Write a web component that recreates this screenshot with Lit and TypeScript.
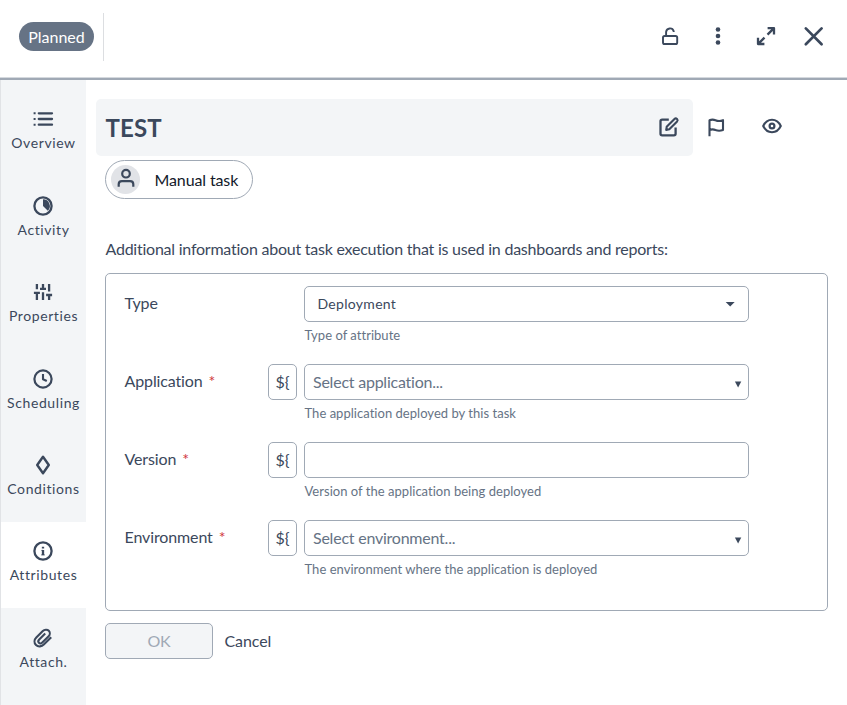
import { LitElement, html, css, svg, nothing, type TemplateResult } from "lit";
import { customElement, property } from "lit/decorators.js";
import { classMap } from "lit/directives/class-map.js";

const icons: Record<string, TemplateResult> = {
  list: svg`<path d="M5.8 4.3H19M5.8 10H19M5.8 15.7H19" stroke-width="2.3" stroke-linecap="round"/><path class="solid" d="M.6 3.3h2v2h-2zM.6 9h2v2h-2zM.6 14.7h2v2h-2z"/>`,
  activity: svg`<circle cx="10" cy="10" r="8.6" stroke-width="2.3"/><path class="solid" d="M10 3.2A6.8 6.8 0 0 1 14.8 14.8L10 10Z"/>`,
  sliders: svg`<path d="M3.9 2V7.2M.9 10.9H6.9M3.9 10.9V18M10 2V6.9M7 6.9H13M10 10.2V18M16.1 2V9.6M13.1 13H19.1M16.1 13V18" stroke-width="2.3"/>`,
  clock: svg`<circle cx="10" cy="10" r="8.6" stroke-width="2.2"/><path d="M10 5V10.2L13.8 12" stroke-width="2.1"/>`,
  diamond: svg`<path d="M10 1.8L15.8 10L10 18.2L4.2 10Z" stroke-width="2.4"/>`,
  info: svg`<circle cx="10" cy="10" r="8.6" stroke-width="2.3"/><path d="M10 8.9V14M10 5.7V7.6" stroke-width="2.3"/><path d="M8.5 9.4H10M8.3 13.9H11.7" stroke-width="1"/>`,
  clip: svg`<path d="M18.2 9.2L10.8 16.6C8.7 18.7 5.2 19.2 3 17C.8 14.8 1.2 11.7 3.3 9.6L9.8 3.1C11.4 1.5 14.2 1.1 15.8 2.7C17.4 4.3 17 6.9 15.4 8.5L9.3 14.6C8.3 15.6 6.8 15.8 5.9 14.8C5 13.9 5.3 12.5 6.2 11.6L12.2 5.6" stroke-width="2.1"/>`,
  lock: svg`<rect x="3" y="10" width="14.2" height="8" rx="1.6" stroke-width="1.9"/><path d="M6.1 9.8V5.8A3.9 3.9 0 0 1 13.7 5.2V5.9" stroke-width="1.9"/>`,
  dots: svg`<g class="solid"><circle cx="10" cy="3.5" r="2.3"/><circle cx="10" cy="10" r="2.3"/><circle cx="10" cy="16.5" r="2.3"/></g>`,
  expand: svg`<path d="M11.5 8.6L17.5 2.6M11.6 2.2H18V8.4M8.5 11.6L2.5 17.6M2 11.8V18H8.4" stroke-width="2.3"/>`,
  close: svg`<path d="M1.8 2.4L17.6 18.2M17.6 2.4L1.8 18.2" stroke-width="2.7" stroke-linecap="round"/>`,
  edit: svg`<path d="M9.8 2.6H3.2Q1.5 2.6 1.5 4.3V16.8Q1.5 18.4 3.2 18.4H14.9Q16.6 18.4 16.6 16.8V10.6" stroke-width="2.3"/><path d="M7.2 12.9L7.7 9.8L15.5 1.9Q16.7 .7 18 1.9Q19.2 3.2 18.1 4.4L10.3 12.3Z" stroke-width="2.1"/>`,
  flag: svg`<path d="M3.5 18.2V2.2Q6.5 1 9.5 2.2Q13 3.8 17 2.2V12Q13 13.4 9.5 12Q6.5 10.7 3.5 12" stroke-width="2.1"/>`,
  eye: svg`<path d="M1.2 10Q4.2 3.8 10 3.8T18.8 10Q15.8 16.2 10 16.2T1.2 10Z" stroke-width="2.1"/><circle cx="10" cy="10" r="2.4" stroke-width="2.2"/>`,
  user: svg`<circle cx="10" cy="5.7" r="3.8" stroke-width="2.2"/><path d="M2.7 18.7V16.3Q2.7 13.1 5.9 13.1H14.1Q17.3 13.1 17.3 16.3V18.7" stroke-width="2.2"/>`,
  caret: svg`<path class="solid" d="M5.7 8H14.7L10.2 12.4Z"/>`,
  triangle: svg`<path class="solid" d="M6.9 9.4H13.3L10.1 15.4Z"/>`,
};

@customElement("app-icon")
class AppIcon extends LitElement {
  @property() name = "";
  static styles = css`
    :host { display: block; width: 20px; height: 20px; flex: none; color: #3b485c; }
    svg { display: block; width: 20px; height: 20px; fill: none; stroke: currentColor; stroke-linejoin: round; overflow: visible; }
    .solid { fill: currentColor; stroke: none; }
  `;
  render() {
    return html`<svg viewBox="0 0 20 20" aria-hidden="true">${icons[this.name]}</svg>`;
  }
}

interface Field {
  label: string;
  hint: string;
  kind: "choice" | "combo" | "text";
  value: string;
  required: boolean;
}

const fields: Field[] = [
  { label: "Type", hint: "Type of attribute", kind: "choice", value: "Deployment", required: false },
  { label: "Application", hint: "The application deployed by this task", kind: "combo", value: "Select application...", required: true },
  { label: "Version", hint: "Version of the application being deployed", kind: "text", value: "", required: true },
  { label: "Environment", hint: "The environment where the application is deployed", kind: "combo", value: "Select environment...", required: true },
];

const tabs = [
  ["list", "Overview"],
  ["activity", "Activity"],
  ["sliders", "Properties"],
  ["clock", "Scheduling"],
  ["diamond", "Conditions"],
  ["info", "Attributes"],
  ["clip", "Attach."],
];

@customElement("app-root")
class AppRoot extends LitElement {
  static styles = css`
    :host { display: flex; flex-direction: column; height: 705px; overflow: hidden; background: #fff; color: #3b485c; font: 16px/20px Lato, sans-serif; font-variant-ligatures: none; }
    * { box-sizing: border-box; }
    .header { height: 80px; flex: none; display: flex; align-items: center; padding: 0 23px 4px 19px; border-bottom: 2px solid #a0a9b5; box-shadow: inset 0 -1px #d5d9de; }
    .status { height: 29px; width: 75px; border-radius: 15px; background: #667385; color: #fff; line-height: 29px; text-align: center; margin-top: -1px; }
    .divider { width: 1px; height: 48px; margin-left: 9px; background: #dcdee1; }
    .actions { display: flex; gap: 28px; margin: -2px 0 0 auto; }
    .body { flex: 1; display: flex; min-height: 0; }
    .tabs { width: 86px; flex: none; padding-top: 9.38px; background: #f3f5f7; border-left: 1px solid #e1e3e6; }
    .tab { height: 86.4px; display: flex; flex-direction: column; align-items: center; padding-top: 20px; font-size: 14px; letter-spacing: .6px; }
    .tab app-icon { margin-left: -1px; }
    .tab span { margin-top: 4px; white-space: nowrap; }
    .active { background: #fff; box-shadow: inset 0 1px #f3f5f7; }
    .main { flex: 1; padding: 19px 19px 0 10px; }
    .titlebar { display: flex; align-items: center; }
    .title { width: 597px; height: 57px; display: flex; align-items: center; justify-content: space-between; padding: 0 14px 0 9.5px; border-radius: 5px; background: #f3f5f7; font-size: 24px; font-weight: 700; letter-spacing: .1px; }
    .title app-icon { margin-top: -2px; }
    .flag { margin-left: 13px; }
    .eye { margin: -4px 0 0 36px; }
    .content { padding-left: 9px; }
    .kind { width: 148px; height: 39px; margin-top: 4px; display: flex; align-items: center; gap: 14.5px; padding: 0 0 1px 5px; border: 1px solid #a0a9b5; border-radius: 20px; color: #13192a; letter-spacing: -.12px; }
    .kind span { padding-top: 2px; }
    .avatar { width: 29px; height: 29px; border-radius: 50%; background: #e1e3e7; display: flex; align-items: center; justify-content: center; }
    .avatar app-icon { margin-top: -2px; }
    .lead { margin: 40px 0 14px .5px; letter-spacing: -.235px; white-space: nowrap; }
    .form { height: 338px; padding: 12px 0 0 18.5px; border: 1px solid #a0a9b5; border-radius: 5px; }
    .row { height: 78px; display: grid; grid-template-columns: 143.5px 29px 445px; grid-template-rows: 36px 27px; }
    .label { padding-top: 7px; letter-spacing: -.12px; }
    .star { margin-left: 2px; color: #d0363c; font-size: 16px; line-height: 16px; }
    .prefix { grid-column: 2; height: 36px; border: 1px solid #a0a9b5; border-radius: 5px; line-height: 34px; text-align: center; }
    .control { grid-column: 3; margin-left: 7px; width: 445px; height: 36px; display: flex; align-items: center; justify-content: space-between; border: 1px solid #a0a9b5; border-radius: 5px; background: #fff; padding: 0 0 0 8px; color: #667385; letter-spacing: -.23px; }
    .choice { padding: 0 8px 0 12.5px; font-size: 14px; letter-spacing: .3px; color: #3b485c; }
    .hint { grid-column: 3; margin-left: 7.5px; padding-top: 3px; font-size: 13px; color: #667385; letter-spacing: .03px; }
    .buttons { display: flex; gap: 11.5px; margin-top: 12px; line-height: 36px; letter-spacing: -.1px; }
    .ok { width: 108px; height: 36px; border: 1px solid #a0a9b5; border-radius: 5px; background: #f3f5f7; color: #a0a9b5; text-align: center; line-height: 34px; }
  `;

  private renderField(f: Field) {
    return html`<div class="row">
      <div class="label">${f.label}${f.required ? html`<span class="star"> *</span>` : nothing}</div>
      ${f.required ? html`<div class="prefix">\${</div>` : nothing}
      <div class=${classMap({ control: true, choice: f.kind === "choice" })}>
        <span>${f.value}</span>
        ${f.kind === "text" ? nothing : html`<app-icon name=${f.kind === "choice" ? "caret" : "triangle"}></app-icon>`}
      </div>
      <div class="hint">${f.hint}</div>
    </div>`;
  }

  render() {
    return html`
      <header class="header">
        <div class="status">Planned</div>
        <div class="divider"></div>
        <div class="actions">${["lock", "dots", "expand", "close"].map((n) => html`<app-icon name=${n}></app-icon>`)}</div>
      </header>
      <div class="body">
        <nav class="tabs">
          ${tabs.map(([icon, text]) => html`<div class=${classMap({ tab: true, active: text === "Attributes" })}>
            <app-icon name=${icon}></app-icon><span>${text}</span>
          </div>`)}
        </nav>
        <main class="main">
          <div class="titlebar">
            <div class="title">TEST<app-icon name="edit"></app-icon></div>
            <app-icon class="flag" name="flag"></app-icon>
            <app-icon class="eye" name="eye"></app-icon>
          </div>
          <div class="content">
            <div class="kind"><div class="avatar"><app-icon name="user"></app-icon></div><span>Manual task</span></div>
            <p class="lead">Additional information about task execution that is used in dashboards and reports:</p>
            <section class="form">${fields.map((f) => this.renderField(f))}</section>
            <div class="buttons"><div class="ok">OK</div><div>Cancel</div></div>
          </div>
        </main>
      </div>`;
  }
}
